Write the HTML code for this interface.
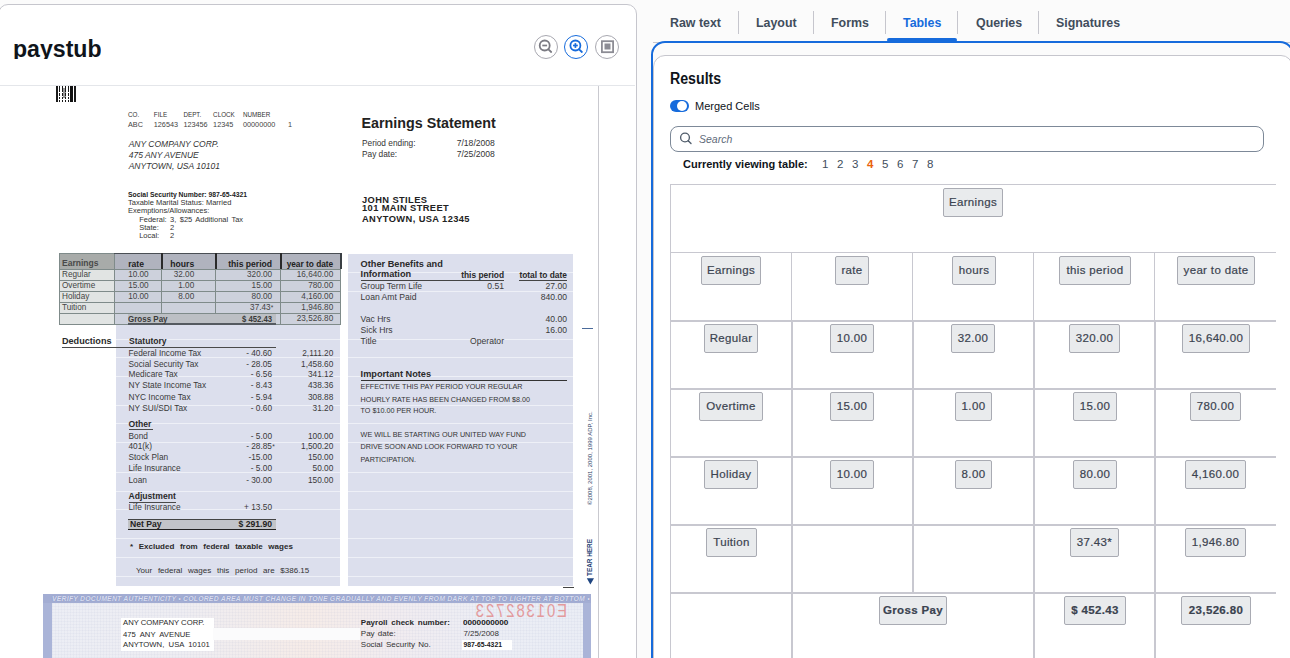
<!DOCTYPE html>
<html><head><meta charset="utf-8">
<style>
*{box-sizing:border-box;margin:0;padding:0}
html,body{width:1290px;height:658px;overflow:hidden;background:#fbfbfb;font-family:"Liberation Sans",sans-serif;position:relative}
.a{position:absolute;white-space:nowrap}
/* left card */
#card{position:absolute;left:-2px;top:4px;width:639px;height:700px;background:#fff;border:1px solid #c6c6cd;border-radius:10px;overflow:hidden}
#hdrline{position:absolute;left:0;top:80px;width:636px;height:1px;background:#e4e6ea}
#title{position:absolute;left:13px;top:32px;height:27px;overflow:hidden;font-weight:bold;font-size:23.5px;color:#0f141a;line-height:34px;transform:scaleX(0.983);transform-origin:0 0}
.zb{position:absolute;top:35px;width:24px;height:24px;border-radius:50%;border:1px solid #a8a8b0;background:#fff}
/* right */
.tab{position:absolute;top:15px;font-weight:bold;font-size:12.4px;color:#414d5c;line-height:16px}
.sep{position:absolute;top:11px;width:1px;height:23px;background:#c6c6cd}
#blue{position:absolute;left:651px;top:41px;width:643px;height:700px;border:2px solid #166bdc;border-radius:14px}
#inner{position:absolute;left:653px;top:55px;width:640px;height:700px;border:1px solid #c6c6cd;border-radius:12px;background:#fff}
.chip{position:absolute;height:29px;background:#e9ebed;border:1px solid #a9abb3;border-radius:2px;font-size:11.5px;color:#3b4350;text-align:center;line-height:27px;letter-spacing:0.35px;-webkit-text-stroke:0.2px #3b4350}
.chip.b{font-weight:bold}
.hl{position:absolute;background:#c8c8d0;height:1px}
.vl{position:absolute;background:#c8c8d0;width:1px}
</style></head><body>

<div id="card">
  <div id="hdrline"></div>
</div>
<div id="doc" class="a" style="left:0;top:0;width:636px;height:658px;clip-path:inset(86px 0 0 0)">
<div class="a" style="left:56.20px;top:86.00px;width:2.00px;height:15.70px;background:#1a1a1a;"></div>
<div class="a" style="left:70.00px;top:86.00px;width:3.00px;height:15.70px;background:#111;"></div>
<div class="a" style="left:74.00px;top:86.00px;width:2.00px;height:15.70px;background:#1a1a1a;"></div>
<div class="a" style="left:62.50px;top:88.00px;width:3.00px;height:10.00px;background:#9a9a9a;"></div>
<div class="a" style="left:59.00px;top:86.00px;width:1.40px;height:1.60px;background:#1a1a1a;"></div>
<div class="a" style="left:59.00px;top:88.30px;width:1.40px;height:3.70px;background:#1a1a1a;"></div>
<div class="a" style="left:59.00px;top:92.80px;width:1.40px;height:3.70px;background:#1a1a1a;"></div>
<div class="a" style="left:59.00px;top:97.30px;width:1.40px;height:1.70px;background:#1a1a1a;"></div>
<div class="a" style="left:59.00px;top:99.80px;width:1.40px;height:1.90px;background:#1a1a1a;"></div>
<div class="a" style="left:62.00px;top:86.00px;width:1.40px;height:1.60px;background:#1a1a1a;"></div>
<div class="a" style="left:62.00px;top:88.30px;width:1.40px;height:3.70px;background:#1a1a1a;"></div>
<div class="a" style="left:62.00px;top:92.80px;width:1.40px;height:3.70px;background:#1a1a1a;"></div>
<div class="a" style="left:62.00px;top:97.30px;width:1.40px;height:1.70px;background:#1a1a1a;"></div>
<div class="a" style="left:62.00px;top:99.80px;width:1.40px;height:1.90px;background:#1a1a1a;"></div>
<div class="a" style="left:65.00px;top:86.00px;width:1.40px;height:1.60px;background:#1a1a1a;"></div>
<div class="a" style="left:65.00px;top:88.30px;width:1.40px;height:3.70px;background:#1a1a1a;"></div>
<div class="a" style="left:65.00px;top:92.80px;width:1.40px;height:3.70px;background:#1a1a1a;"></div>
<div class="a" style="left:65.00px;top:97.30px;width:1.40px;height:1.70px;background:#1a1a1a;"></div>
<div class="a" style="left:65.00px;top:99.80px;width:1.40px;height:1.90px;background:#1a1a1a;"></div>
<div class="a" style="left:67.70px;top:86.00px;width:1.40px;height:1.60px;background:#1a1a1a;"></div>
<div class="a" style="left:67.70px;top:88.30px;width:1.40px;height:3.70px;background:#1a1a1a;"></div>
<div class="a" style="left:67.70px;top:92.80px;width:1.40px;height:3.70px;background:#1a1a1a;"></div>
<div class="a" style="left:67.70px;top:97.30px;width:1.40px;height:1.70px;background:#1a1a1a;"></div>
<div class="a" style="left:67.70px;top:99.80px;width:1.40px;height:1.90px;background:#1a1a1a;"></div>
<div class="a" style="top:111.67px;font-size:6.30px;line-height:6.30px;color:#333;left:128.00px;">CO.</div>
<div class="a" style="top:111.67px;font-size:6.30px;line-height:6.30px;color:#333;left:153.80px;">FILE</div>
<div class="a" style="top:111.67px;font-size:6.30px;line-height:6.30px;color:#333;left:183.40px;">DEPT.</div>
<div class="a" style="top:111.67px;font-size:6.30px;line-height:6.30px;color:#333;left:213.10px;">CLOCK</div>
<div class="a" style="top:111.67px;font-size:6.30px;line-height:6.30px;color:#333;left:243.00px;">NUMBER</div>
<div class="a" style="top:120.86px;font-size:7.25px;line-height:7.25px;color:#444;left:128.00px;">ABC</div>
<div class="a" style="top:120.86px;font-size:7.25px;line-height:7.25px;color:#444;left:153.80px;">126543</div>
<div class="a" style="top:120.86px;font-size:7.25px;line-height:7.25px;color:#444;left:183.40px;">123456</div>
<div class="a" style="top:120.86px;font-size:7.25px;line-height:7.25px;color:#444;left:213.10px;">12345</div>
<div class="a" style="top:120.86px;font-size:7.25px;line-height:7.25px;color:#444;left:243.00px;">00000000</div>
<div class="a" style="top:120.86px;font-size:7.25px;line-height:7.25px;color:#444;left:288.00px;">1</div>
<div class="a" style="top:140.10px;font-size:8.50px;line-height:8.50px;color:#333;font-style:italic;left:128.70px;">ANY COMPANY CORP.</div>
<div class="a" style="top:151.10px;font-size:8.50px;line-height:8.50px;color:#333;font-style:italic;left:128.70px;">475 ANY AVENUE</div>
<div class="a" style="top:162.00px;font-size:8.50px;line-height:8.50px;color:#333;font-style:italic;left:128.70px;">ANYTOWN, USA 10101</div>
<div class="a" style="top:192.24px;font-size:6.80px;line-height:6.80px;color:#222;font-weight:bold;left:128.00px;">Social Security Number: 987-65-4321</div>
<div class="a" style="top:199.35px;font-size:7.50px;line-height:7.50px;color:#333;left:128.00px;">Taxable Marital Status: Married</div>
<div class="a" style="top:207.35px;font-size:7.50px;line-height:7.50px;color:#333;left:128.00px;">Exemptions/Allowances:</div>
<div class="a" style="top:215.85px;font-size:7.50px;line-height:7.50px;color:#333;word-spacing:1.30px;left:139.20px;">Federal:  3, $25  Additional  Tax</div>
<div class="a" style="top:223.65px;font-size:7.50px;line-height:7.50px;color:#333;left:139.20px;">State:</div>
<div class="a" style="top:223.65px;font-size:7.50px;line-height:7.50px;color:#333;left:170.00px;">2</div>
<div class="a" style="top:231.65px;font-size:7.50px;line-height:7.50px;color:#333;left:139.20px;">Local:</div>
<div class="a" style="top:231.65px;font-size:7.50px;line-height:7.50px;color:#333;left:170.00px;">2</div>
<div class="a" style="top:115.50px;font-size:14.30px;line-height:14.30px;color:#222;font-weight:bold;left:361.50px;">Earnings Statement</div>
<div class="a" style="top:138.97px;font-size:8.30px;line-height:8.30px;color:#333;left:362.00px;">Period  ending:</div>
<div class="a" style="top:138.72px;font-size:8.60px;line-height:8.60px;color:#333;left:94.90px;width:400px;text-align:right;">7/18/2008</div>
<div class="a" style="top:149.87px;font-size:8.30px;line-height:8.30px;color:#333;left:362.00px;">Pay  date:</div>
<div class="a" style="top:149.62px;font-size:8.60px;line-height:8.60px;color:#333;left:94.90px;width:400px;text-align:right;">7/25/2008</div>
<div class="a" style="top:195.63px;font-size:9.30px;line-height:9.30px;color:#222;font-weight:bold;letter-spacing:0.40px;left:362.00px;">JOHN STILES</div>
<div class="a" style="top:204.43px;font-size:9.30px;line-height:9.30px;color:#222;font-weight:bold;letter-spacing:0.40px;left:362.00px;">101 MAIN STREET</div>
<div class="a" style="top:214.63px;font-size:9.30px;line-height:9.30px;color:#222;font-weight:bold;letter-spacing:0.40px;left:362.00px;">ANYTOWN, USA 12345</div>
<div class="a" style="left:116.00px;top:254.00px;width:224.30px;height:331.50px;background:#dcdfed;"></div>
<div class="a" style="left:348.00px;top:254.00px;width:225.00px;height:331.50px;background:#dcdfed;"></div>
<div class="a" style="left:116.00px;top:272.00px;width:224.30px;height:1.30px;background:#eef0f7;"></div>
<div class="a" style="left:348.00px;top:272.00px;width:225.00px;height:1.30px;background:#eef0f7;"></div>
<div class="a" style="left:116.00px;top:291.00px;width:224.30px;height:1.30px;background:#eef0f7;"></div>
<div class="a" style="left:348.00px;top:291.00px;width:225.00px;height:1.30px;background:#eef0f7;"></div>
<div class="a" style="left:116.00px;top:339.00px;width:224.30px;height:1.30px;background:#eef0f7;"></div>
<div class="a" style="left:348.00px;top:339.00px;width:225.00px;height:1.30px;background:#eef0f7;"></div>
<div class="a" style="left:116.00px;top:357.00px;width:224.30px;height:1.30px;background:#eef0f7;"></div>
<div class="a" style="left:348.00px;top:357.00px;width:225.00px;height:1.30px;background:#eef0f7;"></div>
<div class="a" style="left:116.00px;top:375.50px;width:224.30px;height:1.30px;background:#eef0f7;"></div>
<div class="a" style="left:348.00px;top:375.50px;width:225.00px;height:1.30px;background:#eef0f7;"></div>
<div class="a" style="left:116.00px;top:405.00px;width:224.30px;height:1.30px;background:#eef0f7;"></div>
<div class="a" style="left:348.00px;top:405.00px;width:225.00px;height:1.30px;background:#eef0f7;"></div>
<div class="a" style="left:116.00px;top:423.00px;width:224.30px;height:1.30px;background:#eef0f7;"></div>
<div class="a" style="left:348.00px;top:423.00px;width:225.00px;height:1.30px;background:#eef0f7;"></div>
<div class="a" style="left:116.00px;top:442.00px;width:224.30px;height:1.30px;background:#eef0f7;"></div>
<div class="a" style="left:348.00px;top:442.00px;width:225.00px;height:1.30px;background:#eef0f7;"></div>
<div class="a" style="left:116.00px;top:471.50px;width:224.30px;height:1.30px;background:#eef0f7;"></div>
<div class="a" style="left:348.00px;top:471.50px;width:225.00px;height:1.30px;background:#eef0f7;"></div>
<div class="a" style="left:116.00px;top:490.50px;width:224.30px;height:1.30px;background:#eef0f7;"></div>
<div class="a" style="left:348.00px;top:490.50px;width:225.00px;height:1.30px;background:#eef0f7;"></div>
<div class="a" style="left:116.00px;top:508.50px;width:224.30px;height:1.30px;background:#eef0f7;"></div>
<div class="a" style="left:348.00px;top:508.50px;width:225.00px;height:1.30px;background:#eef0f7;"></div>
<div class="a" style="left:116.00px;top:537.50px;width:224.30px;height:1.30px;background:#eef0f7;"></div>
<div class="a" style="left:348.00px;top:537.50px;width:225.00px;height:1.30px;background:#eef0f7;"></div>
<div class="a" style="left:116.00px;top:556.50px;width:224.30px;height:1.30px;background:#eef0f7;"></div>
<div class="a" style="left:348.00px;top:556.50px;width:225.00px;height:1.30px;background:#eef0f7;"></div>
<div class="a" style="left:116.00px;top:575.50px;width:224.30px;height:1.30px;background:#eef0f7;"></div>
<div class="a" style="left:348.00px;top:575.50px;width:225.00px;height:1.30px;background:#eef0f7;"></div>
<div class="a" style="left:59.00px;top:253.00px;width:282.00px;height:72.00px;background:#7f8b8a;"></div>
<div class="a" style="left:60.00px;top:254.00px;width:54.00px;height:15.00px;background:#a8aba9;"></div>
<div class="a" style="left:115.00px;top:254.00px;width:46.00px;height:15.00px;background:#b0b3be;"></div>
<div class="a" style="left:162.00px;top:254.00px;width:53.00px;height:15.00px;background:#b0b3be;"></div>
<div class="a" style="left:216.00px;top:254.00px;width:64.00px;height:15.00px;background:#b0b3be;"></div>
<div class="a" style="left:281.00px;top:254.00px;width:59.00px;height:15.00px;background:#b0b3be;"></div>
<div class="a" style="left:60.00px;top:270.00px;width:54.00px;height:10.00px;background:#e1e4e3;"></div>
<div class="a" style="left:115.00px;top:270.00px;width:46.00px;height:10.00px;background:#cdd1dc;"></div>
<div class="a" style="left:162.00px;top:270.00px;width:53.00px;height:10.00px;background:#cdd1dc;"></div>
<div class="a" style="left:216.00px;top:270.00px;width:64.00px;height:10.00px;background:#cdd1dc;"></div>
<div class="a" style="left:281.00px;top:270.00px;width:59.00px;height:10.00px;background:#cdd1dc;"></div>
<div class="a" style="left:60.00px;top:281.00px;width:54.00px;height:10.00px;background:#e1e4e3;"></div>
<div class="a" style="left:115.00px;top:281.00px;width:46.00px;height:10.00px;background:#cdd1dc;"></div>
<div class="a" style="left:162.00px;top:281.00px;width:53.00px;height:10.00px;background:#cdd1dc;"></div>
<div class="a" style="left:216.00px;top:281.00px;width:64.00px;height:10.00px;background:#cdd1dc;"></div>
<div class="a" style="left:281.00px;top:281.00px;width:59.00px;height:10.00px;background:#cdd1dc;"></div>
<div class="a" style="left:60.00px;top:292.00px;width:54.00px;height:10.00px;background:#e1e4e3;"></div>
<div class="a" style="left:115.00px;top:292.00px;width:46.00px;height:10.00px;background:#cdd1dc;"></div>
<div class="a" style="left:162.00px;top:292.00px;width:53.00px;height:10.00px;background:#cdd1dc;"></div>
<div class="a" style="left:216.00px;top:292.00px;width:64.00px;height:10.00px;background:#cdd1dc;"></div>
<div class="a" style="left:281.00px;top:292.00px;width:59.00px;height:10.00px;background:#cdd1dc;"></div>
<div class="a" style="left:60.00px;top:303.00px;width:54.00px;height:10.00px;background:#e1e4e3;"></div>
<div class="a" style="left:115.00px;top:303.00px;width:46.00px;height:10.00px;background:#cdd1dc;"></div>
<div class="a" style="left:162.00px;top:303.00px;width:53.00px;height:10.00px;background:#cdd1dc;"></div>
<div class="a" style="left:216.00px;top:303.00px;width:64.00px;height:10.00px;background:#cdd1dc;"></div>
<div class="a" style="left:281.00px;top:303.00px;width:59.00px;height:10.00px;background:#cdd1dc;"></div>
<div class="a" style="left:60.00px;top:314.00px;width:54.00px;height:10.00px;background:#e1e4e3;"></div>
<div class="a" style="left:115.00px;top:314.00px;width:46.00px;height:10.00px;background:#cdd1dc;"></div>
<div class="a" style="left:162.00px;top:314.00px;width:53.00px;height:10.00px;background:#cdd1dc;"></div>
<div class="a" style="left:216.00px;top:314.00px;width:64.00px;height:10.00px;background:#cdd1dc;"></div>
<div class="a" style="left:281.00px;top:314.00px;width:59.00px;height:10.00px;background:#cdd1dc;"></div>
<div class="a" style="left:114.00px;top:253.00px;width:227.00px;height:1.00px;background:#4a4f55;"></div>
<div class="a" style="left:161.00px;top:253.00px;width:2.00px;height:16.00px;background:#2a2a2a;"></div>
<div class="a" style="left:215.00px;top:253.00px;width:2.00px;height:16.00px;background:#2a2a2a;"></div>
<div class="a" style="left:280.00px;top:253.00px;width:2.00px;height:16.00px;background:#2a2a2a;"></div>
<div class="a" style="left:340.00px;top:253.00px;width:1.50px;height:16.00px;background:#3a3f44;"></div>
<div class="a" style="left:128.00px;top:314.00px;width:148.00px;height:9.60px;background:#bcbfc4;"></div>
<div class="a" style="left:128.00px;top:323.40px;width:148.00px;height:1.20px;background:#555a60;"></div>
<div class="a" style="top:259.21px;font-size:9.20px;line-height:9.20px;color:#4a4a4a;font-weight:bold;left:62.00px;transform:scaleX(0.930);transform-origin:0 0;">Earnings</div>
<div class="a" style="top:259.52px;font-size:8.60px;line-height:8.60px;color:#222;font-weight:bold;left:128.20px;">rate</div>
<div class="a" style="top:259.52px;font-size:8.60px;line-height:8.60px;color:#222;font-weight:bold;left:-205.80px;width:400px;text-align:right;">hours</div>
<div class="a" style="top:259.52px;font-size:8.60px;line-height:8.60px;color:#222;font-weight:bold;left:-127.90px;width:400px;text-align:right;">this period</div>
<div class="a" style="top:259.77px;font-size:8.30px;line-height:8.30px;color:#222;font-weight:bold;left:-66.80px;width:400px;text-align:right;">year to date</div>
<div class="a" style="top:270.66px;font-size:8.20px;line-height:8.20px;color:#444;left:62.00px;">Regular</div>
<div class="a" style="top:270.66px;font-size:8.20px;line-height:8.20px;color:#444;left:128.20px;">10.00</div>
<div class="a" style="top:270.66px;font-size:8.20px;line-height:8.20px;color:#444;left:-205.80px;width:400px;text-align:right;">32.00</div>
<div class="a" style="top:270.66px;font-size:8.20px;line-height:8.20px;color:#444;left:-127.90px;width:400px;text-align:right;">320.00</div>
<div class="a" style="top:270.66px;font-size:8.20px;line-height:8.20px;color:#444;left:-66.80px;width:400px;text-align:right;">16,640.00</div>
<div class="a" style="top:282.06px;font-size:8.20px;line-height:8.20px;color:#444;left:62.00px;">Overtime</div>
<div class="a" style="top:282.06px;font-size:8.20px;line-height:8.20px;color:#444;left:128.20px;">15.00</div>
<div class="a" style="top:282.06px;font-size:8.20px;line-height:8.20px;color:#444;left:-205.80px;width:400px;text-align:right;">1.00</div>
<div class="a" style="top:282.06px;font-size:8.20px;line-height:8.20px;color:#444;left:-127.90px;width:400px;text-align:right;">15.00</div>
<div class="a" style="top:282.06px;font-size:8.20px;line-height:8.20px;color:#444;left:-66.80px;width:400px;text-align:right;">780.00</div>
<div class="a" style="top:292.86px;font-size:8.20px;line-height:8.20px;color:#444;left:62.00px;">Holiday</div>
<div class="a" style="top:292.86px;font-size:8.20px;line-height:8.20px;color:#444;left:128.20px;">10.00</div>
<div class="a" style="top:292.86px;font-size:8.20px;line-height:8.20px;color:#444;left:-205.80px;width:400px;text-align:right;">8.00</div>
<div class="a" style="top:292.86px;font-size:8.20px;line-height:8.20px;color:#444;left:-127.90px;width:400px;text-align:right;">80.00</div>
<div class="a" style="top:292.86px;font-size:8.20px;line-height:8.20px;color:#444;left:-66.80px;width:400px;text-align:right;">4,160.00</div>
<div class="a" style="top:303.86px;font-size:8.20px;line-height:8.20px;color:#444;left:62.00px;">Tuition</div>
<div class="a" style="top:303.86px;font-size:8.20px;line-height:8.20px;color:#444;left:-129.40px;width:400px;text-align:right;">37.43</div>
<div class="a" style="top:305.25px;font-size:6.56px;line-height:6.56px;color:#444;left:270.80px;">*</div>
<div class="a" style="top:303.86px;font-size:8.20px;line-height:8.20px;color:#444;left:-66.80px;width:400px;text-align:right;">1,946.80</div>
<div class="a" style="top:314.52px;font-size:8.60px;line-height:8.60px;color:#3a3a3a;font-weight:bold;left:128.20px;transform:scaleX(0.930);transform-origin:0 0;">Gross Pay</div>
<div class="a" style="top:314.77px;font-size:8.30px;line-height:8.30px;color:#3a3a3a;font-weight:bold;left:-128.00px;width:400px;text-align:right;transform:scaleX(0.930);transform-origin:100% 0;">$  452.43</div>
<div class="a" style="top:314.86px;font-size:8.20px;line-height:8.20px;color:#444;left:-66.80px;width:400px;text-align:right;">23,526.80</div>
<div class="a" style="top:337.10px;font-size:9.10px;line-height:9.10px;color:#2a2a2a;font-weight:bold;left:62.00px;">Deductions</div>
<div class="a" style="left:62.00px;top:346.60px;width:214.40px;height:1.00px;background:#4a4a4a;"></div>
<div class="a" style="top:337.18px;font-size:9.00px;line-height:9.00px;color:#2a2a2a;font-weight:bold;left:128.50px;transform:scaleX(0.950);transform-origin:0 0;">Statutory</div>
<div class="a" style="top:348.77px;font-size:8.30px;line-height:8.30px;color:#3a3a3a;left:128.50px;">Federal Income Tax</div>
<div class="a" style="top:348.77px;font-size:8.30px;line-height:8.30px;color:#3a3a3a;left:-128.00px;width:400px;text-align:right;">- 40.60</div>
<div class="a" style="top:348.77px;font-size:8.30px;line-height:8.30px;color:#3a3a3a;left:-66.70px;width:400px;text-align:right;">2,111.20</div>
<div class="a" style="top:359.57px;font-size:8.30px;line-height:8.30px;color:#3a3a3a;left:128.50px;">Social Security Tax</div>
<div class="a" style="top:359.57px;font-size:8.30px;line-height:8.30px;color:#3a3a3a;left:-128.00px;width:400px;text-align:right;">- 28.05</div>
<div class="a" style="top:359.57px;font-size:8.30px;line-height:8.30px;color:#3a3a3a;left:-66.70px;width:400px;text-align:right;">1,458.60</div>
<div class="a" style="top:370.37px;font-size:8.30px;line-height:8.30px;color:#3a3a3a;left:128.50px;">Medicare Tax</div>
<div class="a" style="top:370.37px;font-size:8.30px;line-height:8.30px;color:#3a3a3a;left:-128.00px;width:400px;text-align:right;">- 6.56</div>
<div class="a" style="top:370.37px;font-size:8.30px;line-height:8.30px;color:#3a3a3a;left:-66.70px;width:400px;text-align:right;">341.12</div>
<div class="a" style="top:381.37px;font-size:8.30px;line-height:8.30px;color:#3a3a3a;left:128.50px;">NY State Income Tax</div>
<div class="a" style="top:381.37px;font-size:8.30px;line-height:8.30px;color:#3a3a3a;left:-128.00px;width:400px;text-align:right;">- 8.43</div>
<div class="a" style="top:381.37px;font-size:8.30px;line-height:8.30px;color:#3a3a3a;left:-66.70px;width:400px;text-align:right;">438.36</div>
<div class="a" style="top:392.57px;font-size:8.30px;line-height:8.30px;color:#3a3a3a;left:128.50px;">NYC Income Tax</div>
<div class="a" style="top:392.57px;font-size:8.30px;line-height:8.30px;color:#3a3a3a;left:-128.00px;width:400px;text-align:right;">- 5.94</div>
<div class="a" style="top:392.57px;font-size:8.30px;line-height:8.30px;color:#3a3a3a;left:-66.70px;width:400px;text-align:right;">308.88</div>
<div class="a" style="top:404.07px;font-size:8.30px;line-height:8.30px;color:#3a3a3a;left:128.50px;">NY SUI/SDI Tax</div>
<div class="a" style="top:404.07px;font-size:8.30px;line-height:8.30px;color:#3a3a3a;left:-128.00px;width:400px;text-align:right;">- 0.60</div>
<div class="a" style="top:404.07px;font-size:8.30px;line-height:8.30px;color:#3a3a3a;left:-66.70px;width:400px;text-align:right;">31.20</div>
<div class="a" style="top:431.57px;font-size:8.30px;line-height:8.30px;color:#3a3a3a;left:128.50px;">Bond</div>
<div class="a" style="top:431.57px;font-size:8.30px;line-height:8.30px;color:#3a3a3a;left:-128.00px;width:400px;text-align:right;">- 5.00</div>
<div class="a" style="top:431.57px;font-size:8.30px;line-height:8.30px;color:#3a3a3a;left:-66.70px;width:400px;text-align:right;">100.00</div>
<div class="a" style="top:442.27px;font-size:8.30px;line-height:8.30px;color:#3a3a3a;left:128.50px;">401(k)</div>
<div class="a" style="top:442.27px;font-size:8.30px;line-height:8.30px;color:#3a3a3a;left:-128.00px;width:400px;text-align:right;">- 28.85</div>
<div class="a" style="top:442.27px;font-size:8.30px;line-height:8.30px;color:#3a3a3a;left:-66.70px;width:400px;text-align:right;">1,500.20</div>
<div class="a" style="top:453.47px;font-size:8.30px;line-height:8.30px;color:#3a3a3a;left:128.50px;">Stock Plan</div>
<div class="a" style="top:453.47px;font-size:8.30px;line-height:8.30px;color:#3a3a3a;left:-128.00px;width:400px;text-align:right;">-15.00</div>
<div class="a" style="top:453.47px;font-size:8.30px;line-height:8.30px;color:#3a3a3a;left:-66.70px;width:400px;text-align:right;">150.00</div>
<div class="a" style="top:464.47px;font-size:8.30px;line-height:8.30px;color:#3a3a3a;left:128.50px;">Life Insurance</div>
<div class="a" style="top:464.47px;font-size:8.30px;line-height:8.30px;color:#3a3a3a;left:-128.00px;width:400px;text-align:right;">- 5.00</div>
<div class="a" style="top:464.47px;font-size:8.30px;line-height:8.30px;color:#3a3a3a;left:-66.70px;width:400px;text-align:right;">50.00</div>
<div class="a" style="top:475.67px;font-size:8.30px;line-height:8.30px;color:#3a3a3a;left:128.50px;">Loan</div>
<div class="a" style="top:475.67px;font-size:8.30px;line-height:8.30px;color:#3a3a3a;left:-128.00px;width:400px;text-align:right;">- 30.00</div>
<div class="a" style="top:475.67px;font-size:8.30px;line-height:8.30px;color:#3a3a3a;left:-66.70px;width:400px;text-align:right;">150.00</div>
<div class="a" style="top:443.80px;font-size:6.50px;line-height:6.50px;color:#3a3a3a;left:272.30px;">*</div>
<div class="a" style="top:419.72px;font-size:8.60px;line-height:8.60px;color:#2a2a2a;font-weight:bold;left:128.50px;">Other</div>
<div class="a" style="left:128.50px;top:429.20px;width:24.00px;height:1.00px;background:#4a4a4a;"></div>
<div class="a" style="top:492.12px;font-size:8.60px;line-height:8.60px;color:#2a2a2a;font-weight:bold;left:128.50px;">Adjustment</div>
<div class="a" style="left:128.50px;top:501.60px;width:47.00px;height:1.00px;background:#4a4a4a;"></div>
<div class="a" style="top:503.37px;font-size:8.30px;line-height:8.30px;color:#3a3a3a;left:128.50px;">Life Insurance</div>
<div class="a" style="top:503.37px;font-size:8.30px;line-height:8.30px;color:#3a3a3a;left:-128.00px;width:400px;text-align:right;">+ 13.50</div>
<div class="a" style="left:128.00px;top:519.20px;width:148.30px;height:10.60px;background:#c2c4c9;"></div>
<div class="a" style="left:128.00px;top:518.80px;width:148.30px;height:1.00px;background:#444;"></div>
<div class="a" style="left:128.00px;top:529.40px;width:148.30px;height:1.00px;background:#222;"></div>
<div class="a" style="top:519.92px;font-size:8.60px;line-height:8.60px;color:#222;font-weight:bold;left:130.00px;">Net Pay</div>
<div class="a" style="top:519.92px;font-size:8.60px;line-height:8.60px;color:#222;font-weight:bold;left:-128.00px;width:400px;text-align:right;">$ 291.90</div>
<div class="a" style="top:543.43px;font-size:8.00px;line-height:8.00px;color:#2a2a2a;font-weight:bold;word-spacing:3.40px;left:130.00px;">* Excluded  from  federal  taxable  wages</div>
<div class="a" style="top:566.53px;font-size:8.00px;line-height:8.00px;color:#333;word-spacing:3.50px;left:136.00px;">Your  federal  wages  this  period  are  $386.15</div>
<div class="a" style="top:260.01px;font-size:9.20px;line-height:9.20px;color:#2a2a2a;font-weight:bold;left:360.60px;">Other Benefits and</div>
<div class="a" style="top:270.01px;font-size:9.20px;line-height:9.20px;color:#2a2a2a;font-weight:bold;left:360.60px;">Information</div>
<div class="a" style="top:270.69px;font-size:8.40px;line-height:8.40px;color:#2a2a2a;font-weight:bold;left:104.00px;width:400px;text-align:right;">this period</div>
<div class="a" style="top:270.69px;font-size:8.40px;line-height:8.40px;color:#2a2a2a;font-weight:bold;left:166.90px;width:400px;text-align:right;">total to date</div>
<div class="a" style="left:360.60px;top:279.80px;width:143.40px;height:1.00px;background:#444;"></div>
<div class="a" style="left:518.60px;top:279.80px;width:48.40px;height:1.00px;background:#444;"></div>
<div class="a" style="top:281.52px;font-size:8.60px;line-height:8.60px;color:#3a3a3a;left:360.60px;">Group  Term  Life</div>
<div class="a" style="top:281.52px;font-size:8.60px;line-height:8.60px;color:#3a3a3a;left:104.00px;width:400px;text-align:right;">0.51</div>
<div class="a" style="top:281.52px;font-size:8.60px;line-height:8.60px;color:#3a3a3a;left:167.00px;width:400px;text-align:right;">27.00</div>
<div class="a" style="top:292.92px;font-size:8.60px;line-height:8.60px;color:#3a3a3a;left:360.60px;">Loan  Amt  Paid</div>
<div class="a" style="top:292.92px;font-size:8.60px;line-height:8.60px;color:#3a3a3a;left:167.00px;width:400px;text-align:right;">840.00</div>
<div class="a" style="top:315.22px;font-size:8.60px;line-height:8.60px;color:#3a3a3a;left:360.60px;">Vac  Hrs</div>
<div class="a" style="top:315.22px;font-size:8.60px;line-height:8.60px;color:#3a3a3a;left:167.00px;width:400px;text-align:right;">40.00</div>
<div class="a" style="top:326.42px;font-size:8.60px;line-height:8.60px;color:#3a3a3a;left:360.60px;">Sick Hrs</div>
<div class="a" style="top:326.42px;font-size:8.60px;line-height:8.60px;color:#3a3a3a;left:167.00px;width:400px;text-align:right;">16.00</div>
<div class="a" style="top:336.72px;font-size:8.60px;line-height:8.60px;color:#3a3a3a;left:360.60px;">Title</div>
<div class="a" style="top:336.72px;font-size:8.60px;line-height:8.60px;color:#3a3a3a;left:104.00px;width:400px;text-align:right;">Operator</div>
<div class="a" style="top:369.91px;font-size:9.20px;line-height:9.20px;color:#2a2a2a;font-weight:bold;left:360.60px;">Important  Notes</div>
<div class="a" style="left:360.60px;top:379.90px;width:206.40px;height:1.00px;background:#333;"></div>
<div class="a" style="top:383.31px;font-size:7.20px;line-height:7.20px;color:#333;left:360.60px;">EFFECTIVE THIS PAY PERIOD YOUR REGULAR</div>
<div class="a" style="top:395.61px;font-size:7.20px;line-height:7.20px;color:#333;left:360.60px;">HOURLY RATE HAS BEEN CHANGED FROM $8.00</div>
<div class="a" style="top:407.31px;font-size:7.20px;line-height:7.20px;color:#333;left:360.60px;">TO $10.00 PER HOUR.</div>
<div class="a" style="top:431.41px;font-size:7.20px;line-height:7.20px;color:#333;left:360.60px;">WE WILL BE STARTING OUR UNITED WAY FUND</div>
<div class="a" style="top:443.41px;font-size:7.20px;line-height:7.20px;color:#333;left:360.60px;">DRIVE SOON AND LOOK FORWARD TO YOUR</div>
<div class="a" style="top:455.81px;font-size:7.20px;line-height:7.20px;color:#333;left:360.60px;">PARTICIPATION.</div>
<div class="a" style="left:581.70px;top:327.80px;width:11.00px;height:1.00px;background:#4a6a9a;"></div>
<div class="a" style="left:563.00px;top:587.30px;width:11.00px;height:1.00px;background:#444;"></div>
<div class="a" style="left:586.5px;top:505px;font-size:6px;line-height:6px;color:#2c3e66;transform:rotate(-90deg);transform-origin:0 0">©2008, 2001, 2000, 1999 ADP, Inc.</div>
<div class="a" style="left:585.5px;top:576px;font-size:6.4px;line-height:8px;font-weight:bold;color:#1f3f75;transform:rotate(-90deg);transform-origin:0 0">TEAR HERE</div>
<svg class="a" style="left:586px;top:577.5px" width="9" height="8" viewBox="0 0 9 8"><path d="M0.8 0.3 L8 0.3 L4.4 6.6 Z" fill="#1f4580"/></svg>
<div class="a" style="left:598.00px;top:86.00px;width:1.00px;height:572.00px;background:#c9c9cf;"></div>
<div class="a" style="left:43px;top:594px;width:548px;height:70px;background:repeating-linear-gradient(0deg,rgba(140,150,190,0.06) 0 1px,transparent 1px 3px),repeating-linear-gradient(90deg,rgba(140,150,190,0.06) 0 1px,transparent 1px 3px),linear-gradient(90deg,#eceef5 0%,#eeedf2 25%,#f6ece8 48%,#f1ecf0 65%,#eceef5 82%,#eaedf5 100%)"></div>
<div class="a" style="left:43.00px;top:594.00px;width:548.00px;height:8.60px;background:#a3add3;"></div>
<div class="a" style="left:43px;top:594px;width:548px;height:9px;overflow:hidden"><div class="a" style="left:9px;top:0.5px;font-size:6.9px;line-height:8px;font-weight:bold;font-style:italic;color:#d8ddf0;letter-spacing:0.2px;text-shadow:0 0 1px #7d89b8">VERIFY DOCUMENT AUTHENTICITY • COLORED AREA MUST CHANGE IN TONE GRADUALLY AND EVENLY FROM DARK AT TOP TO LIGHTER AT BOTTOM •</div></div>
<div class="a" style="left:43.00px;top:602.60px;width:8.80px;height:61.40px;background:#aab4d8;"></div>
<div class="a" style="left:582.80px;top:602.60px;width:8.20px;height:61.40px;background:#aab4d8;"></div>
<div class="a" style="left:121.00px;top:618.40px;width:92.70px;height:32.60px;background:#ffffff;"></div>
<div class="a" style="left:213.00px;top:628.00px;width:147.00px;height:11.70px;background:#fbfbfc;"></div>
<div class="a" style="top:619.28px;font-size:7.70px;line-height:7.70px;color:#2a2a2a;left:123.00px;">ANY COMPANY CORP.</div>
<div class="a" style="top:631.18px;font-size:7.70px;line-height:7.70px;color:#2a2a2a;word-spacing:2.20px;left:123.00px;">475  ANY  AVENUE</div>
<div class="a" style="top:641.48px;font-size:7.70px;line-height:7.70px;color:#2a2a2a;word-spacing:2.20px;left:123.00px;">ANYTOWN,  USA  10101</div>
<div class="a" style="top:618.63px;font-size:8.00px;line-height:8.00px;color:#2a2a2a;font-weight:bold;word-spacing:1.60px;left:360.80px;">Payroll  check  number:</div>
<div class="a" style="top:618.63px;font-size:8.00px;line-height:8.00px;color:#1a1a1a;font-weight:bold;left:463.40px;transform:scaleX(1.020);transform-origin:0 0;">0000000000</div>
<div class="a" style="top:629.83px;font-size:8.00px;line-height:8.00px;color:#333;word-spacing:1.00px;left:360.80px;">Pay  date:</div>
<div class="a" style="top:629.83px;font-size:8.00px;line-height:8.00px;color:#333;left:463.40px;">7/25/2008</div>
<div class="a" style="top:641.03px;font-size:8.00px;line-height:8.00px;color:#333;word-spacing:1.20px;left:360.80px;">Social  Security  No.</div>
<div class="a" style="left:462.00px;top:640.00px;width:50.00px;height:10.00px;background:#ffffff;"></div>
<div class="a" style="top:641.84px;font-size:6.80px;line-height:6.80px;color:#1a1a1a;font-weight:bold;left:463.40px;">987-65-4321</div>
<div class="a" style="left:485.8px;top:602px;width:88px;height:18px;overflow:visible"><div style="font-size:17.8px;line-height:18px;color:#e39a9c;white-space:nowrap;letter-spacing:2.2px;transform-origin:44px 9px;transform:scaleX(-0.84)">E01382723</div></div>
</div>
<div id="title">paystub</div>
<div class="zb" style="left:534px"></div>
<div class="zb" style="left:564px;border:1.6px solid #166bdc"></div>
<div class="zb" style="left:595px"></div>
<svg class="a" style="left:534px;top:35px" width="90" height="24" viewBox="0 0 90 24">
<circle cx="10.7" cy="10.5" r="5" fill="none" stroke="#7a7a82" stroke-width="1.8"/>
<line x1="8.3" y1="10.5" x2="13.1" y2="10.5" stroke="#7a7a82" stroke-width="1.7"/>
<line x1="14.4" y1="14.3" x2="17.2" y2="17" stroke="#7a7a82" stroke-width="1.8" stroke-linecap="round"/>
<circle cx="41.4" cy="10.5" r="5" fill="none" stroke="#166bdc" stroke-width="1.8"/>
<line x1="39" y1="10.5" x2="43.8" y2="10.5" stroke="#166bdc" stroke-width="1.7"/>
<line x1="41.4" y1="8.1" x2="41.4" y2="12.9" stroke="#166bdc" stroke-width="1.7"/>
<line x1="45.1" y1="14.3" x2="47.9" y2="17" stroke="#166bdc" stroke-width="1.8" stroke-linecap="round"/>
<rect x="67.9" y="6.2" width="11.2" height="11" fill="none" stroke="#8c8c94" stroke-width="1.8"/>
<rect x="70.5" y="8.5" width="6" height="6" fill="#8c8c94"/>
</svg>

<!-- right panel tabs -->
<div class="tab" style="left:670px">Raw text</div>
<div class="sep" style="left:738px"></div>
<div class="tab" style="left:756px">Layout</div>
<div class="sep" style="left:813px"></div>
<div class="tab" style="left:831px">Forms</div>
<div class="sep" style="left:885px"></div>
<div class="tab" style="left:903px;color:#166bdc">Tables</div>
<div class="sep" style="left:957px"></div>
<div class="tab" style="left:976px">Queries</div>
<div class="sep" style="left:1038px"></div>
<div class="tab" style="left:1056px">Signatures</div>
<div class="a" style="left:887px;top:38px;width:70px;height:4px;background:#166bdc;border-radius:2px"></div>
<div class="a" style="left:653px;top:42px;width:640px;height:1px;background:#c6c6cd"></div>
<div id="blue"></div>
<div id="inner"></div>


<!-- results -->
<div class="a" style="left:670px;top:68px;font-weight:bold;font-size:16px;color:#0f141a;line-height:22px;transform:scaleX(0.886);transform-origin:0 0">Results</div>
<div class="a" style="left:670px;top:100px;width:19px;height:12px;border-radius:6px;background:#166bdc"></div>
<div class="a" style="left:677px;top:101px;width:10px;height:10px;border-radius:5px;background:#fff"></div>
<div class="a" style="left:695px;top:99px;font-size:11px;color:#0f141a;line-height:14px">Merged Cells</div>
<div class="a" style="left:670px;top:126px;width:594px;height:26px;border:1px solid #7d8998;border-radius:8px;background:#fff"></div>
<svg class="a" style="left:678px;top:131px" width="16" height="16" viewBox="0 0 16 16"><circle cx="7" cy="6.5" r="4.4" fill="none" stroke="#4f5b6a" stroke-width="1.35"/><line x1="10.2" y1="9.7" x2="13" y2="12.5" stroke="#4f5b6a" stroke-width="1.35" stroke-linecap="round"/></svg>
<div class="a" style="left:699px;top:132px;font-size:10.5px;font-style:italic;color:#5f6b7a;line-height:14px">Search</div>
<div class="a" style="left:683px;top:157px;font-weight:bold;font-size:11px;color:#0f141a;line-height:14px">Currently viewing table:</div>
<div class="a" style="left:822px;top:157px;font-size:11.5px;color:#414d5c;line-height:14px">1</div>
<div class="a" style="left:837px;top:157px;font-size:11.5px;color:#414d5c;line-height:14px">2</div>
<div class="a" style="left:852px;top:157px;font-size:11.5px;color:#414d5c;line-height:14px">3</div>
<div class="a" style="left:867px;top:157px;font-size:11.5px;color:#e9620c;font-weight:bold;line-height:14px">4</div>
<div class="a" style="left:882px;top:157px;font-size:11.5px;color:#414d5c;line-height:14px">5</div>
<div class="a" style="left:897px;top:157px;font-size:11.5px;color:#414d5c;line-height:14px">6</div>
<div class="a" style="left:912px;top:157px;font-size:11.5px;color:#414d5c;line-height:14px">7</div>
<div class="a" style="left:927px;top:157px;font-size:11.5px;color:#414d5c;line-height:14px">8</div>
<div id="tbl" class="a" style="left:0;top:0;width:1276px;height:658px;overflow:hidden">
<div class="hl" style="left:670px;top:184px;width:620px"></div>
<div class="vl" style="left:670px;top:184px;height:480px"></div>
<div class="hl" style="left:670px;top:252px;width:620px;height:1px"></div>
<div class="hl" style="left:670px;top:320px;width:620px;height:2px"></div>
<div class="hl" style="left:670px;top:388px;width:620px;height:2px"></div>
<div class="hl" style="left:670px;top:456px;width:620px;height:2px"></div>
<div class="hl" style="left:670px;top:524px;width:620px;height:2px"></div>
<div class="hl" style="left:670px;top:592px;width:620px;height:2px"></div>
<div class="vl" style="left:791px;top:252px;height:68px;width:1px"></div>
<div class="vl" style="left:912px;top:252px;height:68px;width:1px"></div>
<div class="vl" style="left:1033px;top:252px;height:68px;width:1px"></div>
<div class="vl" style="left:1154px;top:252px;height:68px;width:1px"></div>
<div class="vl" style="left:791px;top:320px;height:68px;width:2px"></div>
<div class="vl" style="left:912px;top:320px;height:68px;width:2px"></div>
<div class="vl" style="left:1033px;top:320px;height:68px;width:2px"></div>
<div class="vl" style="left:1154px;top:320px;height:68px;width:2px"></div>
<div class="vl" style="left:791px;top:388px;height:68px;width:2px"></div>
<div class="vl" style="left:912px;top:388px;height:68px;width:2px"></div>
<div class="vl" style="left:1033px;top:388px;height:68px;width:2px"></div>
<div class="vl" style="left:1154px;top:388px;height:68px;width:2px"></div>
<div class="vl" style="left:791px;top:456px;height:68px;width:2px"></div>
<div class="vl" style="left:912px;top:456px;height:68px;width:2px"></div>
<div class="vl" style="left:1033px;top:456px;height:68px;width:2px"></div>
<div class="vl" style="left:1154px;top:456px;height:68px;width:2px"></div>
<div class="vl" style="left:791px;top:524px;height:68px;width:2px"></div>
<div class="vl" style="left:912px;top:524px;height:68px;width:2px"></div>
<div class="vl" style="left:1033px;top:524px;height:68px;width:2px"></div>
<div class="vl" style="left:1154px;top:524px;height:68px;width:2px"></div>
<div class="vl" style="left:791px;top:592px;height:70px;width:2px"></div>
<div class="vl" style="left:1033px;top:592px;height:70px;width:2px"></div>
<div class="vl" style="left:1154px;top:592px;height:70px;width:2px"></div>
<div class="chip" style="left:943px;top:188px;width:60px">Earnings</div>
<div class="chip" style="left:701px;top:256px;width:60px">Earnings</div>
<div class="chip" style="left:835px;top:256px;width:34px">rate</div>
<div class="chip" style="left:952px;top:256px;width:44px">hours</div>
<div class="chip" style="left:1059px;top:256px;width:72px">this period</div>
<div class="chip" style="left:1177px;top:256px;width:78px">year to date</div>
<div class="chip" style="left:704px;top:324px;width:54px">Regular</div>
<div class="chip" style="left:830px;top:324px;width:44px">10.00</div>
<div class="chip" style="left:951px;top:324px;width:44px">32.00</div>
<div class="chip" style="left:1069px;top:324px;width:51px">320.00</div>
<div class="chip" style="left:1182px;top:324px;width:68px">16,640.00</div>
<div class="chip" style="left:699px;top:392px;width:64px">Overtime</div>
<div class="chip" style="left:830px;top:392px;width:44px">15.00</div>
<div class="chip" style="left:955px;top:392px;width:37px">1.00</div>
<div class="chip" style="left:1073px;top:392px;width:44px">15.00</div>
<div class="chip" style="left:1190px;top:392px;width:51px">780.00</div>
<div class="chip" style="left:704px;top:460px;width:54px">Holiday</div>
<div class="chip" style="left:830px;top:460px;width:44px">10.00</div>
<div class="chip" style="left:955px;top:460px;width:37px">8.00</div>
<div class="chip" style="left:1073px;top:460px;width:44px">80.00</div>
<div class="chip" style="left:1185px;top:460px;width:61px">4,160.00</div>
<div class="chip" style="left:706px;top:528px;width:51px">Tuition</div>
<div class="chip" style="left:1070px;top:528px;width:49px">37.43*</div>
<div class="chip" style="left:1185px;top:528px;width:61px">1,946.80</div>
<div class="chip b" style="left:879px;top:596px;width:68px">Gross Pay</div>
<div class="chip b" style="left:1064px;top:596px;width:62px">$ 452.43</div>
<div class="chip b" style="left:1181px;top:596px;width:70px">23,526.80</div>
</div>
</body></html>
